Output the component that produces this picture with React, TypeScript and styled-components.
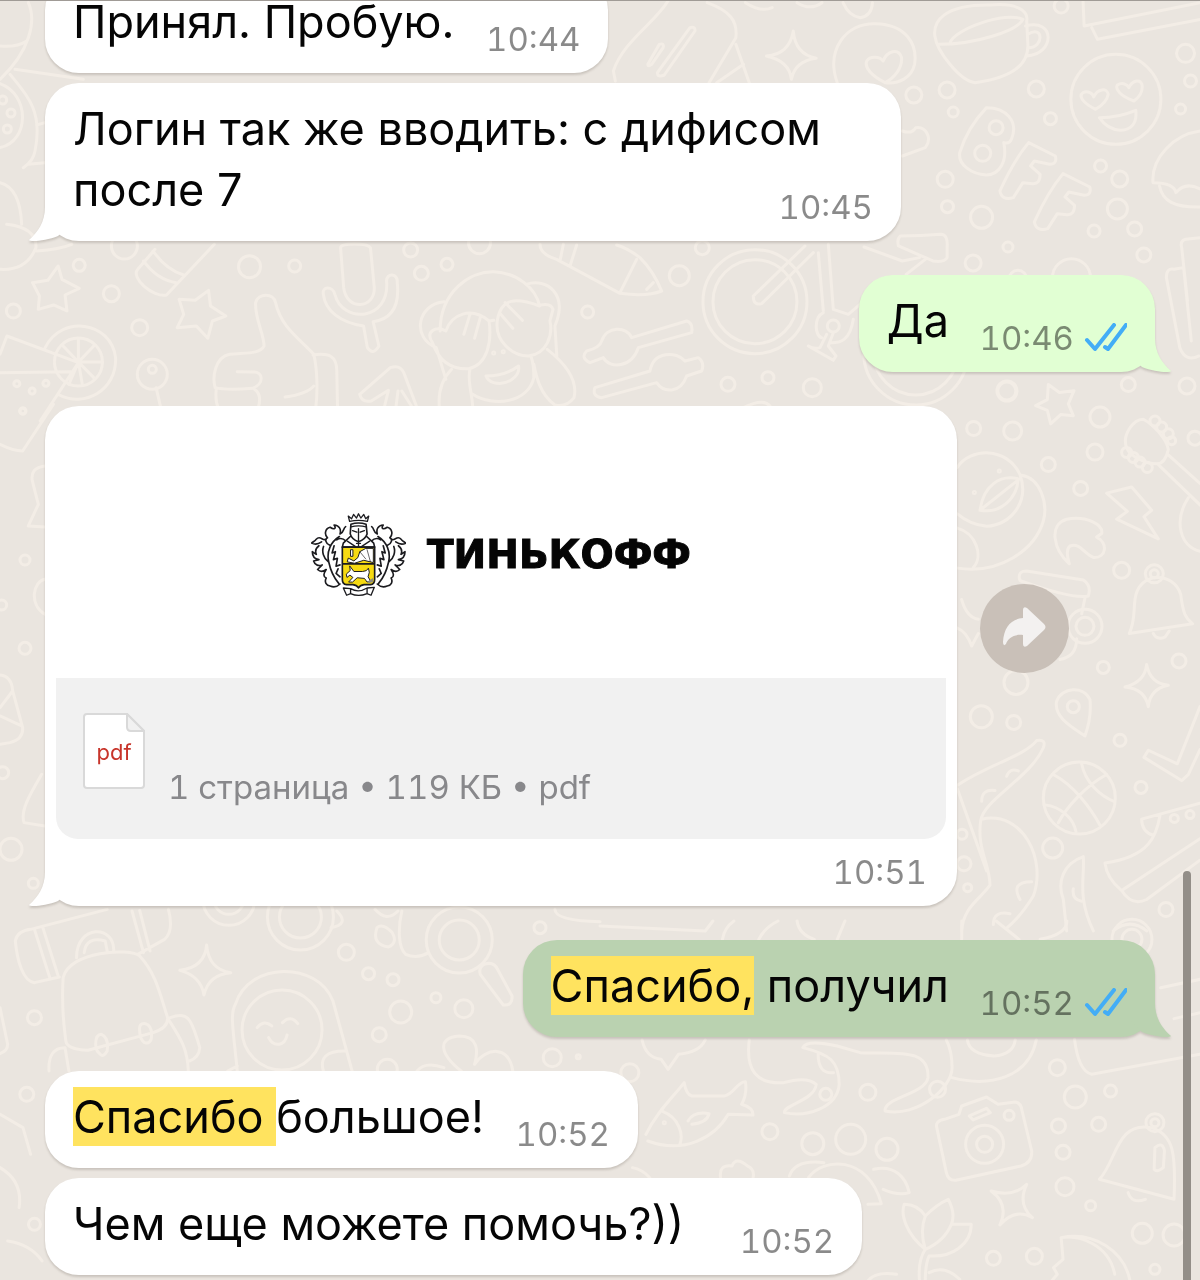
import React from "react";
import styled, { createGlobalStyle } from "styled-components";

const GlobalStyle = createGlobalStyle`
  *, *::before, *::after { box-sizing: border-box; }
  html, body { margin: 0; padding: 0; }
  body {
    background: #eae5df;
    font-family: Inter, "Noto Sans", sans-serif;
    color: #050505;
  }
  p, h1, figure { margin: 0; }
`;

/* ---------- wallpaper ---------- */

type Patch = {
  x: number;
  y: number;
  kx: number;
  ky: number;
  lines: string;
  rings: [number, number, number][];
};

const K = 0.3827;
const T = 0.3333;

const patches: Patch[] = [
  {
    x: 600, y: 0, kx: K, ky: T,
    lines:
      "M875 105C870 60 900 10 1020 12C1090 5 1120 30 1115 60L1118 130C1120 190 1080 230 980 245C940 240 880 150 875 105" +
      "M915 125C925 85 1060 30 1105 55C1090 90 980 130 885 130M1112 75C1190 50 1190 160 1115 165M1118 100C1160 70 1160 140 1120 140" +
      "M40 240L35 210C60 120 150 60 180 -5M280 5C340 30 360 60 355 110L285 245M355 130L390 245M375 190L305 245" +
      "M125 190L155 130Q168 125 165 140L135 190Q125 198 125 190ZM150 215L235 80Q250 75 248 90L168 222Q150 230 150 215Z" +
      "M505 90Q510 160 565 172Q510 180 500 235Q495 180 435 165Q495 160 505 90Z" +
      "M620 245C590 150 640 65 720 68C800 70 830 130 822 190C815 230 780 250 745 245C710 225 690 200 697 180C705 165 730 165 740 180C750 150 780 140 788 170C790 200 770 230 745 245" +
      "M635 5Q650 45 680 50Q710 45 712 5M380 5Q420 35 450 20M515 5Q550 30 580 5" +
      "M1295 325C1260 305 1250 285 1262 275C1275 268 1288 278 1290 288C1300 262 1325 260 1328 280C1325 300 1310 315 1295 325Z" +
      "M1395 300C1360 285 1345 265 1352 252C1365 243 1378 250 1382 260C1390 240 1410 232 1416 250C1420 275 1405 292 1395 300Z" +
      "M1305 350Q1355 350 1400 328Q1405 385 1360 388Q1325 385 1305 350Z" +
      "M1262 -5L1265 75L1570 5M1285 80L1300 115L1570 55" +
      "M940 455Q960 380 1010 320C1060 320 1095 360 1075 415Q1070 430 1055 425C1065 480 1045 520 1010 522C970 520 935 490 940 455Z" +
      "M1120 425l70 40q5 25-15 25l-40-10l-10 15l25 25q0 30-20 28l-25-3l-25 45q-30 10-35-20q35-90 75-145z" +
      "M1210 518l70 40q5 25-15 25l-40-10l-10 15l25 25q0 30-20 28l-25-3l-25 45q-30 10-35-20q35-90 75-145z" +
      "M1570 390C1500 400 1440 470 1445 545Q1500 545 1505 575Q1530 540 1570 565M1462 555C1470 600 1500 620 1570 618" +
      "M1570 710L1530 715Q1515 720 1520 740L1535 900M1480 830Q1480 800 1500 805L1525 800L1545 1020M1480 830L1515 1040Q1530 1085 1565 1065" +
      "M785 705Q840 705 890 700Q910 700 907 740L907 770Q900 785 870 780L780 735Q775 715 785 705ZM690 738L790 780L835 770M800 820L850 775" +
      "M790 390Q815 400 825 380C850 375 870 410 850 440L790 465",
    rings: [
      [1348, 295, 45], [1035, 380, 7], [1000, 457, 8], [820, 282, 8], [907, 267, 8], [923, 333, 5],
      [1140, 264, 8], [1177, 353, 6], [1205, 15, 7], [1530, 157, 9], [1543, 240, 6], [1517, 324, 5],
      [1308, 495, 6], [1358, 534, 8], [902, 535, 8], [908, 617, 6], [997, 649, 11], [1352, 624, 10],
      [1291, 690, 6], [1397, 684, 7], [1421, 762, 7], [1066, 738, 5], [975, 786, 8], [1092, 835, 9],
      [1232, 830, 19], [1063, 1170, 9], [825, 1056, 52], [825, 1056, 42],
    ],
  },
  {
    x: 0, y: 230, kx: K, ky: T,
    lines:
      "M152 105L162 145L207 172L170 192L175 240L140 222L100 235L103 195L85 155L125 148Z" +
      "M545 178L550 225L590 255L555 270L543 322L513 285L463 290L480 250L468 205L510 208Z" +
      "M405 55L360 115C340 140 400 200 435 192L560 40M375 90C400 130 430 150 460 155M400 60C430 110 460 125 480 132" +
      "M890 50C890 35 960 35 968 50L978 170C980 235 905 240 898 170Z" +
      "M845 190C840 165 870 165 875 190C895 280 1020 270 1010 150C1010 125 1040 125 1038 155C1045 230 1020 265 975 272L990 345Q975 375 960 350L950 285C890 275 850 240 845 190" +
      "M668 215C675 185 715 185 720 215C735 290 780 320 820 370C830 420 830 490 825 530M668 215C665 260 690 310 690 345C680 370 640 365 600 370C560 380 555 440 562 470Q590 478 660 472C690 460 690 420 660 423L620 422" +
      "M565 475Q562 510 570 530M665 475Q685 490 675 530M818 372C860 365 880 375 880 420L882 530M745 498Q800 490 820 465" +
      "M18 315L205 395L105 570M0 370L18 315M0 425L185 422M118 350C160 250 290 270 302 380C305 480 220 530 155 492" +
      "M205 393V325M205 393L245 345M205 393L268 393M205 393L245 440M205 393L215 460M205 393L165 345M205 393L180 460" +
      "M408 470L420 530M940 490L1020 410Q1045 400 1055 425L1088 525M940 490Q945 515 970 510L1015 478L1005 525M1040 480L1035 525M1050 480L1075 525" +
      "M1150 300C1150 180 1230 120 1290 122C1350 125 1400 170 1410 225C1350 200 1310 200 1300 265C1290 330 1340 375 1380 375C1430 370 1445 310 1437 270L1445 235Q1440 215 1412 222" +
      "M1290 268L1278 270C1230 225 1180 250 1165 300C1140 285 1110 300 1130 335C1150 400 1190 415 1225 413C1275 400 1285 330 1278 270" +
      "M1160 212C1090 220 1075 320 1140 350L1165 445M1375 160C1430 140 1485 190 1450 285L1455 375" +
      "M1228 250L1212 310M1255 260L1240 322M1320 215L1365 268M1305 245L1340 292M1270 435Q1320 435 1355 405C1360 440 1320 465 1290 455Q1275 450 1270 435Z" +
      "M1180 415C1150 450 1145 490 1148 530M1228 415C1220 450 1235 490 1235 530M1235 490C1290 530 1380 515 1395 440Q1395 400 1388 378M1430 355C1480 400 1510 450 1500 500Q1480 530 1450 522C1410 490 1400 430 1395 400",
    rings: [
      [207, 103, 6], [291, 188, 8], [35, 240, 7], [365, 290, 8], [652, 107, 11], [770, 105, 6],
      [1073, 57, 7], [1101, 127, 7], [1168, 100, 6], [325, 45, 13], [1253, 35, 11],
      [205, 393, 24], [398, 430, 15], [398, 415, 4], [44, 458, 3], [84, 480, 3], [120, 457, 3], [60, 540, 3],
      [1290, 366, 1], [1315, 362, 1],
    ],
  },
  {
    x: 480, y: 240, kx: T, ky: T,
    lines:
      "M180 10Q180 40 230 55L420 157Q500 168 545 150Q520 90 480 50Q440 20 410 12M240 60L250 10M270 75L290 12M470 55L420 155M500 145L520 125" +
      "M320 330Q360 320 365 300C380 255 440 255 455 290L620 240Q640 245 635 275L475 320C455 380 390 385 370 350L330 365Q300 350 320 330Z" +
      "M345 440L510 390C520 330 590 330 615 360L655 350Q675 365 665 390L620 405C600 460 550 455 530 425L365 470Q335 465 345 440Z" +
      "M820 165L975 15M820 165Q820 195 845 188L1000 35M1015 35L1030 210M1045 10L1060 205L1105 220L1140 190M1030 215C1000 230 1005 285 1025 290M1120 235C1110 300 1080 305 1055 305" +
      "M985 315Q1000 325 1020 320L1040 280M985 315L1060 358L1068 345L1045 315L1060 275M790 500Q850 470 870 495",
    rings: [
      [598, 104, 10], [323, 213, 6], [667, 20, 7], [744, 430, 7], [864, 410, 6], [997, 440, 9],
      [825, 182, 52], [825, 182, 42], [1060, 255, 6],
    ],
  },
  {
    x: 940, y: 370, kx: T, ky: 0.3571,
    lines:
      "M325 38L358 60L402 55L385 92L400 125L362 122L332 148L322 110L287 97L322 80Z" +
      "M52 270C90 215 200 210 240 290C270 370 210 430 140 435Q90 430 52 400M245 292C300 300 325 370 310 420C285 500 180 570 52 552M52 440C110 455 130 520 100 550M120 390C130 320 180 290 235 302C230 360 180 400 120 390L235 305" +
      "M560 215C545 180 580 135 610 135C640 150 680 190 685 220Q675 260 650 260C620 260 570 240 560 215M685 235L780 315M655 262L780 375M745 355C700 420 720 490 780 505" +
      "M500 342L575 325L635 390L612 408L655 470L530 415L562 393Z" +
      "M388 540C340 500 325 430 380 415C440 405 490 430 485 455L470 465C505 480 500 525 460 522C430 510 420 480 390 490Q375 500 388 540Z" +
      "M568 735C585 700 580 680 585 640C595 560 700 560 722 625C730 680 735 690 758 708ZM640 735Q650 755 675 745L688 728" +
      "M620 822Q630 875 685 880Q630 890 625 940Q615 890 555 885Q615 870 620 822Z" +
      "M238 580Q235 560 260 560L430 585Q455 600 445 630Q400 640 250 590Q238 590 238 580ZM435 635L425 680M410 750Q410 800 360 808" +
      "M435 1022C400 1000 340 970 350 925C365 885 430 880 450 920Q455 970 435 1022Z" +
      "M780 940L712 1100L625 1062L612 1082L725 1147L745 1130L780 1060" +
      "M340 1130C400 1160 450 1220 480 1272M500 1130C440 1160 380 1220 355 1265M425 1100C435 1150 480 1190 522 1205M315 1215C360 1220 400 1250 408 1290" +
      "M52 1160C150 1100 250 1080 290 1035Q320 1030 310 1055C270 1140 130 1200 122 1260C110 1340 150 1380 150 1440C120 1480 70 1500 65 1568M52 1170L140 1400M125 1255C250 1230 320 1370 280 1470Q240 1530 200 1560M200 1135Q210 1110 235 1120M125 1205Q125 1170 165 1175M240 1480Q210 1430 275 1430M160 1550Q160 1510 210 1520" +
      "M430 1360C370 1380 350 1430 370 1480L380 1568M430 1360C435 1420 410 1470 460 1568M400 1450Q395 1480 425 1485" +
      "M605 1255L780 1210M605 1255Q605 1290 640 1300M660 1245C650 1300 630 1360 495 1378Q500 1420 545 1455Q575 1500 620 1480L780 1370M545 1455L780 1310" +
      "M65 640Q80 690 115 695M95 770Q80 730 52 720M95 770L115 735M520 1568Q570 1530 620 1568",
    rings: [
      [201, 56, 10], [218, 168, 9], [101, 161, 7], [480, 129, 10], [465, 227, 8], [565, 38, 7], [741, 42, 8],
      [325, 262, 7], [422, 329, 7], [765, 188, 7], [178, 280, 1], [103, 340, 1], [545, 558, 8], [643, 568, 9],
      [643, 568, 4], [490, 830, 6], [717, 812, 7], [435, 715, 17], [435, 715, 9], [228, 872, 12], [124, 968, 11],
      [221, 984, 7], [540, 1034, 6], [603, 1166, 6], [400, 940, 6], [338, 1336, 10], [418, 1196, 36], [66, 1297, 5],
      [72, 1380, 7], [83, 1447, 4], [678, 1508, 7], [703, 1253, 4], [750, 1242, 4], [645, 140, 5], [665, 157, 5],
      [685, 176, 5], [695, 195, 4], [560, 228, 5], [580, 242, 5], [600, 255, 5], [622, 270, 5],
    ],
  },
  {
    x: 0, y: 880, kx: K, ky: T,
    lines:
      "M280 85L80 145Q45 150 40 180C45 240 60 300 90 305L155 288M90 145L130 290M112 140L152 285M345 90L375 215M365 88L392 210M360 220L430 175Q455 150 440 85" +
      "M165 290C180 210 340 200 365 225C410 280 420 350 438 410Q440 440 400 455L230 508Q175 505 172 480Q160 380 165 290Z" +
      "M200 230C200 130 300 130 297 210M220 215Q225 165 275 180L280 210M440 415C470 470 490 500 492 570M445 410C490 390 500 410 522 500Q520 530 495 540M128 570Q125 500 170 500L180 570" +
      "M250 490Q250 460 265 460Q285 470 280 510Q270 530 262 520Q250 510 250 490ZM365 450Q362 425 380 428Q400 435 395 475Q390 490 378 485Q365 475 365 450Z" +
      "M540 192Q545 265 603 275Q545 280 533 342Q525 285 470 268Q535 260 540 192Z" +
      "M620 570C610 450 600 400 615 370C650 240 830 240 870 360L920 570M845 570Q830 510 900 510M595 570L620 555M672 440Q690 415 710 435M738 425Q760 400 778 428M702 470C715 500 745 495 750 462" +
      "M880 90Q915 130 865 140M1265 250Q1290 240 1300 265L1338 345Q1340 375 1315 372L1255 280Q1250 260 1265 250Z" +
      "M1050 90C1040 140 1040 200 1060 220Q1090 235 1120 215M985 140Q1000 125 1025 155Q1040 185 1015 198Q970 190 985 140ZM980 85Q1010 125 1040 90" +
      "M1205 570C1150 520 1140 470 1200 465C1250 465 1250 510 1240 550C1270 500 1330 490 1340 570M1090 570Q1110 540 1160 560M1450 85Q1450 120 1568 122" +
      "M0 380L20 490Q20 510 0 518M0 700L60 740L80 820M0 860Q60 900 50 980M20 1080Q80 1090 110 1140",
    rings: [
      [785, 108, 21], [785, 108, 33], [598, 55, 26], [598, 55, 15], [905, 214, 8], [963, 278, 6], [1027, 296, 6],
      [1047, 393, 11], [1212, 383, 9], [1139, 350, 5], [991, 461, 7], [90, 410, 7], [1411, 140, 6],
      [1200, 177, 20], [1200, 177, 33], [1443, 530, 9], [1511, 527, 2], [1012, 565, 10], [737, 447, 40],
      [70, 640, 7], [90, 1030, 6],
    ],
  },
  {
    x: 600, y: 920, kx: K, ky: T,
    lines:
      "M120 640C150 570 190 530 220 485Q225 520 240 525L325 525C350 520 360 480 380 482Q385 520 370 550Q400 560 400 582L335 580C300 650 220 700 125 660M165 572C205 590 220 640 208 672M230 600Q245 570 285 578Q280 605 240 610" +
      "M495 765Q510 715 585 725M545 770C580 710 700 700 735 848L700 850M715 745C770 730 800 770 808 815Q780 825 740 805" +
      "M880 620Q875 600 900 595L938 580L945 555L1010 528L1040 550L1085 543Q1100 545 1103 570L1128 690Q1130 725 1100 735L930 778Q910 780 905 755ZM965 585L1010 562L1020 575L975 597Z" +
      "M1115 790Q1090 850 1130 890Q1085 860 1045 912Q1070 850 1022 810Q1080 830 1115 790Z" +
      "M850 985C800 940 785 880 795 850Q830 850 850 885Q880 850 910 835Q930 880 918 910L970 910C970 970 920 1010 860 1005M850 985Q835 930 850 885M850 985Q900 960 918 910M835 1080Q830 1020 850 985M850 1080Q850 1030 860 1005M860 1055Q900 1030 940 1075M700 1080Q720 1050 775 1060" +
      "M1305 775C1350 720 1350 600 1440 620C1500 640 1505 700 1500 835ZM1380 815Q1390 850 1425 835M1450 680Q1470 660 1475 690L1472 740Q1455 755 1448 745Z" +
      "M1180 1080L1195 1060L1185 1040L1210 1015L1205 950C1290 930 1370 990 1385 1080M1205 950C1250 940 1330 970 1345 1060" +
      "M1240 355Q1250 450 1285 460L1568 400M1500 293L1568 275M1465 200L1568 175" +
      "M390 357C380 450 410 490 480 485Q540 465 565 490C560 540 480 550 482 575C540 590 620 560 625 490C625 420 600 400 530 380Q540 355 620 375L680 395C780 400 860 380 857 470C850 520 740 530 745 570C830 590 920 500 920 440Q920 390 905 357M920 470C1020 500 1120 470 1140 357M960 357Q965 400 1030 405Q1080 400 1085 357M570 400Q570 460 610 455" +
      "M315 770Q310 730 345 735Q355 705 385 735Q405 745 400 770M85 740Q110 745 130 770M110 357Q120 410 160 415L178 445L205 400Q260 395 275 357" +
      "M0 15L275 30L295 0M320 55Q325 20 350 0M415 55Q430 20 465 0M515 0Q520 40 560 55M620 55L640 0M945 55V0M1035 0L1095 55M1150 55Q1220 40 1220 0",
    rings: [
      [556, 668, 11], [655, 655, 15], [750, 685, 11], [1069, 583, 5], [1005, 670, 19], [1005, 670, 8],
      [1450, 605, 9], [1450, 605, 4], [700, 514, 8], [882, 505, 8], [590, 520, 6], [1195, 440, 8], [1242, 528, 11],
      [1334, 510, 6], [1198, 615, 7], [1303, 610, 7], [1210, 694, 7], [1215, 797, 9], [1282, 854, 5],
      [1417, 937, 10], [1500, 942, 11], [1028, 1012, 7], [1135, 1006, 8], [1450, 1045, 5], [444, 632, 8],
      [78, 455, 9], [168, 605, 1], [1390, 55, 20], [1390, 55, 10],
    ],
  },
  {
    x: 0, y: 0, kx: T, ky: T,
    lines:
      "M85 5C110 60 90 150 0 235M0 135Q50 140 80 120M45 205L250 235M30 220C80 280 130 330 105 450Q100 480 70 500M0 248C90 280 90 420 0 440M85 490L135 485M110 372L135 365M0 545Q60 560 65 670M20 670Q110 680 108 740Q80 810 0 805M110 750Q180 745 215 730",
    rings: [[33, 336, 4], [22, 384, 4], [8, 297, 4]],
  },
  {
    x: 0, y: 400, kx: T, ky: T,
    lines:
      "M0 130Q40 150 68 150L160 10M135 195Q90 200 97 240L115 310L85 375L135 378M135 535C100 540 85 610 135 640M0 822Q35 825 38 870L68 980Q70 1015 30 1025L0 1030M38 870L0 920M65 975L0 945M125 1120C90 1180 60 1230 72 1265L135 1275",
    rings: [[68, 30, 3], [75, 477, 5], [75, 742, 6], [5, 612, 5], [8, 1115, 6], [33, 1345, 11], [100, 1447, 5]],
  },
];

const WallpaperArt = styled.svg`
  position: absolute;
  inset: 0;
  width: 100%;
  height: 100%;
  fill: none;
  stroke: #f3ede6;
  stroke-width: 3;
  stroke-linecap: round;
  stroke-linejoin: round;

  path { vector-effect: non-scaling-stroke; }
`;

const Wallpaper = () => (
  <WallpaperArt viewBox="0 0 1200 1280" preserveAspectRatio="xMidYMin slice" aria-hidden="true">
    {patches.map((p, i) => (
      <g key={i}>
        <path d={p.lines} transform={`translate(${p.x} ${p.y}) scale(${p.kx} ${p.ky})`} />
        {p.rings.map(([cx, cy, r], j) => (
          <circle key={j} cx={p.x + cx * p.kx} cy={p.y + cy * p.ky} r={r} />
        ))}
      </g>
    ))}
  </WallpaperArt>
);

/* ---------- chat ---------- */

const Screen = styled.main`
  position: relative;
  height: 100vh;
  overflow: hidden;
  display: flex;
  flex-direction: column;
  justify-content: flex-end;
  border-top: 1px solid #a09b96;
  padding: 0 45px 5px;
`;

const Row = styled.div<{ $own?: boolean; $gap?: number }>`
  position: relative;
  flex: none;
  display: flex;
  align-items: center;
  gap: 23px;
  justify-content: ${(p) => (p.$own ? "flex-end" : "flex-start")};
  margin-top: ${(p) => p.$gap ?? 34}px;
`;

type Tone = "white" | "green" | "found";
const tones: Record<Tone, string> = { white: "#ffffff", green: "#e1ffd3", found: "#bad2b0" };

const Bubble = styled.article<{ $tone: Tone }>`
  position: relative;
  display: grid;
  max-width: 856px;
  padding: 15px 28px 14px;
  border-radius: 34px;
  background: ${(p) => tones[p.$tone]};
  color: ${(p) => tones[p.$tone]};
  filter: drop-shadow(0 2px 1px rgba(70, 60, 50, 0.2));
`;

const TailArt = styled.svg<{ $own?: boolean }>`
  position: absolute;
  bottom: 0;
  ${(p) => (p.$own ? "right: -16px; transform: scaleX(-1);" : "left: -16px;")}
  width: 44px;
  height: 40px;
  fill: currentColor;
`;

const Tail = ({ own }: { own?: boolean }) => (
  <TailArt $own={own} viewBox="0 0 44 40" aria-hidden="true">
    <path d="M16 0V6C16 21 9 31 0 39C1 41 17 40 29 35L44 20V0Z" />
  </TailArt>
);

const Text = styled.p`
  grid-area: 1 / 1;
  padding-bottom: 7px;
  font-size: 45px;
  line-height: 61px;
  color: #050505;
`;

const TimeRoom = styled.span<{ $width: number }>`
  display: inline-block;
  width: ${(p) => p.$width}px;
`;

const Mark = styled.mark`
  padding: 2px 0;
  background: #ffe35f;
  color: inherit;
`;

const Meta = styled.footer`
  grid-area: 1 / 1;
  align-self: end;
  justify-self: end;
  display: flex;
  align-items: center;
  gap: 10px;
  font-size: 33px;
  line-height: 40px;
  font-variant-numeric: tabular-nums;
  color: rgba(0, 0, 0, 0.46);
`;

const TicksArt = styled.svg`
  width: 43px;
  height: 30px;
  fill: none;
  stroke: #43adf6;
  stroke-width: 4;
  stroke-linecap: round;
  stroke-linejoin: round;
`;

const Ticks = () => (
  <TicksArt viewBox="0 0 43 30" role="img" aria-label="Прочитано">
    <path d="M3 17L11 26L30 2M21 24L24 26L42 2" />
  </TicksArt>
);

type MessageProps = {
  time: string;
  own?: boolean;
  tail?: boolean;
  gap?: number;
  tone?: Tone;
  room?: number;
  children: React.ReactNode;
};

const Message = ({ time, own, tail, gap, tone = "white", room = own ? 178 : 126, children }: MessageProps) => (
  <Row $own={own} $gap={gap}>
    <Bubble $tone={tone}>
      {tail && <Tail own={own} />}
      <Text>
        {children}
        <TimeRoom $width={room} />
      </Text>
      <Meta>
        <time>{time}</time>
        {own && <Ticks />}
      </Meta>
    </Bubble>
  </Row>
);

/* ---------- document ---------- */

const DocBubble = styled(Bubble)`
  display: flex;
  flex-direction: column;
  flex: 0 1 912px;
  max-width: 912px;
  padding: 0 11px 14px;
`;

const Preview = styled.figure`
  height: 272px;
  padding-top: 26px;
  display: flex;
  align-items: center;
  justify-content: center;
  gap: 21px;
  color: #050505;
`;

const EmblemArt = styled.svg`
  width: 95px;
  height: 84px;
  fill: none;
  stroke: #1b1b1f;
  stroke-width: 5;
  stroke-linejoin: round;
  stroke-linecap: round;
`;

const mantle =
  "M125 54C116 60 122 70 108 76C112 62 106 50 90 49C98 60 90 64 78 56C62 60 60 78 70 88C60 92 66 106 76 110" +
  "M66 92C56 100 48 78 36 92C32 98 26 100 22 104C34 110 44 106 52 100M44 112C36 118 32 128 36 138L24 130C24 144 32 152 44 154L28 158C32 172 44 174 54 170L40 184C48 192 58 190 66 184C58 196 56 206 66 210C60 222 66 232 78 234C88 238 100 236 108 228" +
  "M106 84C80 100 66 130 74 162C80 190 92 212 104 226M98 94C110 86 120 92 126 98M58 114C52 130 58 150 72 160M90 112L84 134L94 130L88 154L100 150L96 174L108 170M102 182L96 196L108 206";

const Emblem = () => (
  <EmblemArt viewBox="20 13 288 254" aria-hidden="true">
    <path d={mantle} />
    <path d={mantle} transform="translate(329 0) scale(-1 1)" />
    <path
      d="M137 38L133 22L143 30L149 17L158 28L164 15L171 28L180 17L186 30L195 22L191 38Q164 32 137 38Z"
      fill="#fff"
      strokeWidth="4"
    />
    <path d="M139 84L118 104L115 116H213L210 104L189 84" fill="#fff" />
    <path d="M141 47Q164 39 187 47L190 76Q185 92 164 100Q143 92 139 76Z" fill="#fff" />
    <path d="M141 55Q164 48 187 55M164 60V100M146 66L159 71M182 66L169 71M130 98L154 114M198 98L174 114M158 105H170M164 102V114" strokeWidth="4" />
    <path
      d="M115 116H213V214Q213 228 200 230H181Q168 232 164 240Q160 232 147 230H128Q115 228 115 214Z"
      fill="#f6da12"
    />
    <path d="M118 167H210" />
    <path
      d="M134 150L150 158L162 148L168 130L186 120H209V163L180 156L152 165L131 161ZM141 124H147V144H141Z"
      fill="#fff"
      strokeWidth="3"
    />
    <path d="M168 130L186 152M190 124L200 160" strokeWidth="2" />
    <path
      d="M138 174L150 190L176 190Q190 190 194 180Q200 192 193 206L200 218L190 222L182 211L160 209L146 222L134 222L147 208L138 201L129 208L127 198L138 188Z"
      fill="#fff"
      strokeWidth="3"
    />
    <path d="M190 222L208 210V222L196 226Z" fill="#8f8c7c" stroke="none" />
    <path d="M118 240L128 262L140 257Q164 268 190 257L202 262L212 238L190 240Q164 256 140 242ZM140 242V257M190 240V257" fill="#fff" strokeWidth="4" />
  </EmblemArt>
);

const Brand = styled.figcaption`
  font-family: "DejaVu Sans", sans-serif;
  font-weight: 700;
  font-size: 39px;
  line-height: 44px;
  -webkit-text-stroke: 1px currentColor;
`;

const FileBar = styled.div`
  display: flex;
  align-items: flex-start;
  gap: 23px;
  height: 161px;
  padding: 35px 27px;
  border-radius: 0 0 22px 22px;
  background: #f1f1f1;
`;

const FileIcon = styled.svg`
  flex: none;
  width: 62px;
  height: 76px;
  fill: #fff;
  stroke: #d9d9d9;
  stroke-width: 2;
  stroke-linejoin: round;

  text {
    fill: #c8352b;
    stroke: none;
    font-size: 22px;
    text-anchor: middle;
  }
`;

const FileInfo = styled.p`
  padding-top: 54px;
  font-size: 33px;
  line-height: 40px;
  font-variant-numeric: tabular-nums;
  color: #88888b;
`;

const DocMeta = styled(Meta)`
  padding: 13px 19px 0 0;
`;

const ForwardButton = styled.button`
  flex: none;
  width: 89px;
  height: 89px;
  margin-bottom: 56px;
  padding: 0;
  border: 0;
  border-radius: 50%;
  background: #c9c0b8;
  cursor: pointer;

  svg { display: block; width: 89px; height: 89px; fill: #f3f1f0; }
`;

const ScrollThumb = styled.div`
  position: absolute;
  right: 9px;
  top: 68%;
  bottom: -10px;
  width: 8px;
  border-radius: 4px;
  background: #938e88;
`;

export default function App() {
  return (
    <Screen>
      <GlobalStyle />
      <Wallpaper />

      <Message time="10:44">Принял. Пробую.</Message>
      <Message time="10:45" gap={10} tail>
        Логин так же вводить: с дифисом после 7
      </Message>
      <Message time="10:46" own tail tone="green">Да</Message>

      <Row>
        <DocBubble $tone="white">
          <Tail />
          <Preview>
            <Emblem />
            <Brand>ТИНЬКОФФ</Brand>
          </Preview>
          <FileBar>
            <FileIcon viewBox="0 0 62 76" role="img" aria-label="pdf">
              <path d="M4 1H44L61 18V72Q61 75 58 75H4Q1 75 1 72V4Q1 1 4 1Z" />
              <path d="M44 1V14Q44 18 48 18H61Z" fill="#f1f1f1" />
              <text x="31" y="47">pdf</text>
            </FileIcon>
            <FileInfo>1 страница • 119 КБ • pdf</FileInfo>
          </FileBar>
          <DocMeta>
            <time>10:51</time>
          </DocMeta>
        </DocBubble>
        <ForwardButton type="button" aria-label="Переслать">
          <svg viewBox="0 0 89 89" aria-hidden="true">
            <path d="M43 26Q43 22 47 24L64 40Q67 43 64 46L47 62Q43 64 43 60V51C34 50 28 54 26 60Q23 63 23 58C24 43 31 35 43 34Z" />
          </svg>
        </ForwardButton>
      </Row>

      <Message time="10:52" own tail tone="found">
        <Mark>Спасибо,</Mark> получил
      </Message>
      <Message time="10:52">
        <Mark>Спасибо </Mark>большое!
      </Message>
      <Message time="10:52" gap={10} room={150}>Чем еще можете помочь?))</Message>

      <ScrollThumb />
    </Screen>
  );
}
